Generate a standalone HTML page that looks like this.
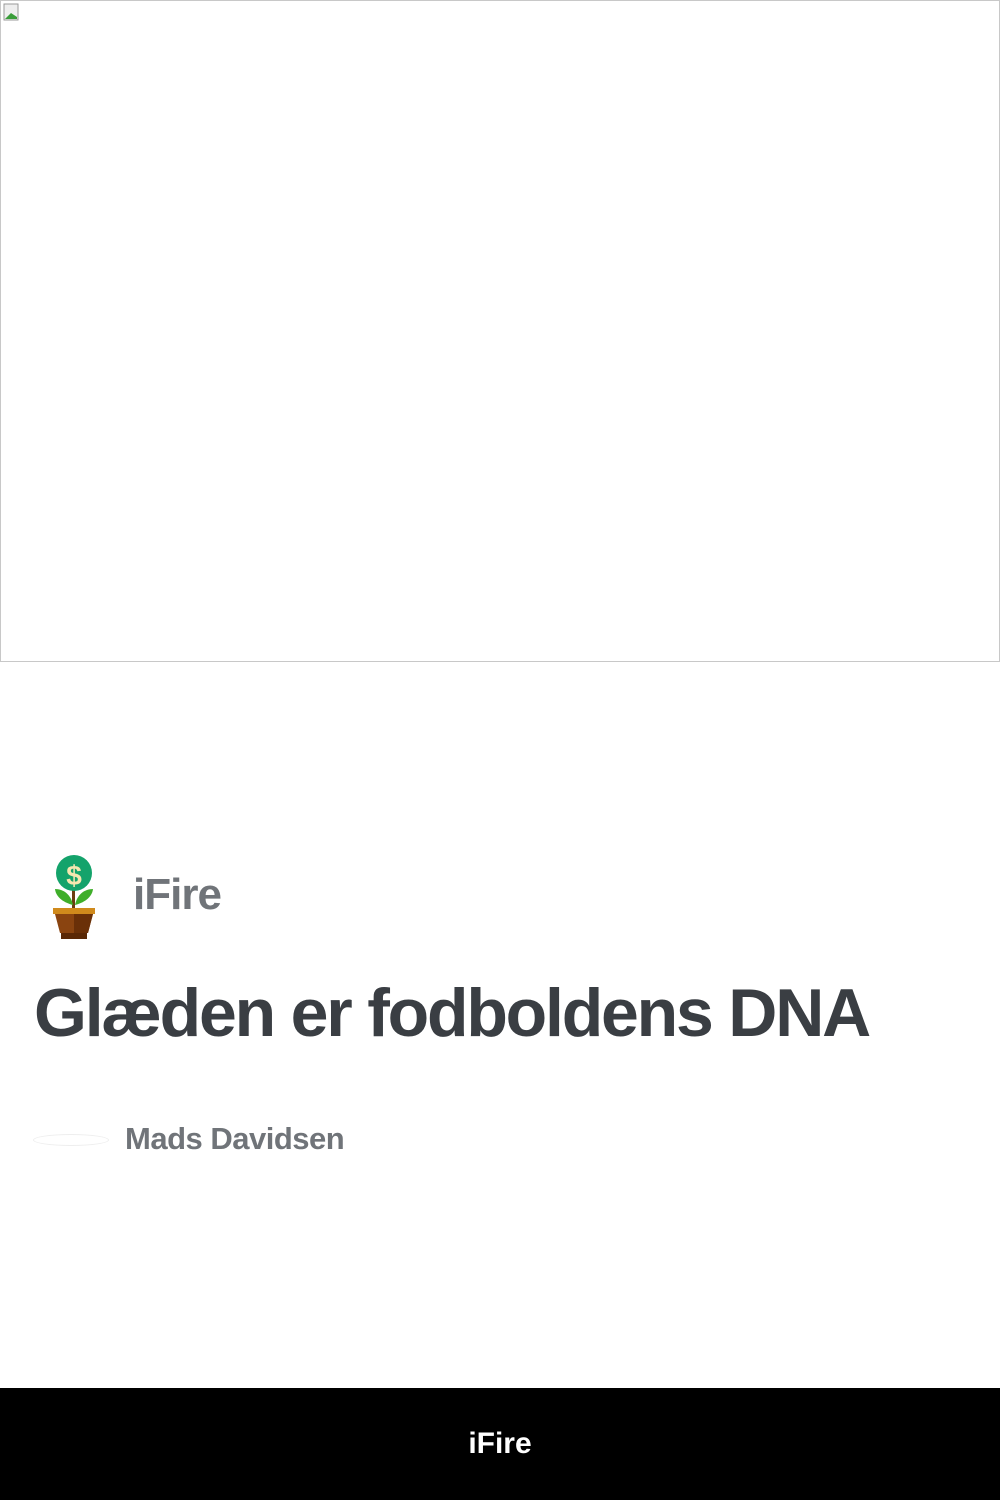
<!DOCTYPE html>
<html><head><meta charset="utf-8"><style>
body{margin:0;width:1000px;height:1500px;background:#fff;font-family:"Liberation Sans",sans-serif;position:relative;overflow:hidden}
.img{position:absolute;left:0;top:0;width:998px;height:660px;border:1px solid #c8c8c8}
.logo{position:absolute;left:50px;top:853px}
.brand{position:absolute;left:133px;top:870px;font-size:44px;font-weight:bold;color:#707479;letter-spacing:-1px}
h1{position:absolute;left:34px;top:974px;margin:0;font-size:68px;font-weight:bold;color:#3a3e43;letter-spacing:-2.2px;white-space:nowrap}
.av{position:absolute;left:33px;top:1134px;width:74px;height:10px;border:1px solid #eee;border-radius:50%}
.author{position:absolute;left:125px;top:1121px;font-size:31px;font-weight:bold;color:#707479;letter-spacing:-0.5px}
.foot{position:absolute;left:0;top:1388px;width:1000px;height:112px;background:#000;color:#fff;font-size:30px;font-weight:bold;text-align:center;line-height:112px}
</style></head><body>
<div class="img"><svg width="18" height="18" style="position:absolute;left:2px;top:2px"><rect x="1" y="1" width="14" height="16" fill="#eee" stroke="#999"/><path d="M2 16 L8 10 L14 14 L14 16Z" fill="#3a9d3a"/></svg></div>
<svg class="logo" width="48" height="88" viewBox="0 0 48 88">
<rect x="22" y="30" width="3" height="28" fill="#6b3d12"/>
<circle cx="24" cy="20" r="18" fill="#14a36b"/>
<text x="24" y="32" font-family="Liberation Sans" font-weight="bold" font-size="28" fill="#f6e7b0" text-anchor="middle">$</text>
<path d="M23 52 C15 50 6 45 5 36 C14 36 21 42 23 52Z" fill="#3fae2a"/>
<path d="M25 52 C33 50 42 45 43 36 C34 36 27 42 25 52Z" fill="#3fae2a"/>
<rect x="3" y="55" width="42" height="6" fill="#d08a1c"/>
<path d="M5 61 H43 L38 80 H10Z" fill="#8a4410"/>
<path d="M24 61 H43 L38 80 H24Z" fill="#6a3008"/>
<rect x="11" y="80" width="26" height="6" fill="#5a2806"/>
</svg>
<div class="brand">iFire</div>
<h1>Glæden er fodboldens DNA</h1>
<div class="av"></div>
<div class="author">Mads Davidsen</div>
<div class="foot">iFire</div>
</body></html>
